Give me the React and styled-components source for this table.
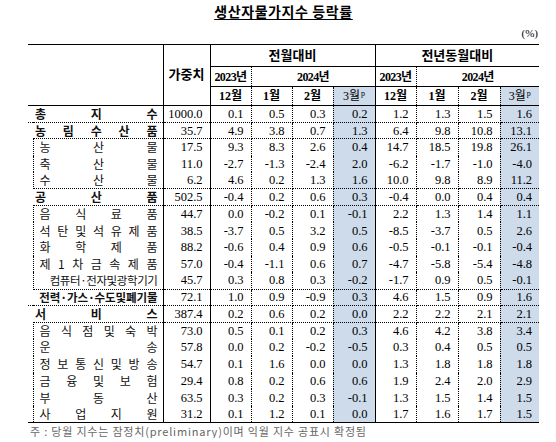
import React from "react";
import styled, { createGlobalStyle } from "styled-components";

// monthly columns: 전월대비 (4) + 전년동월대비 (4)
const MONTHS = ["12월", "1월", "2월", "3월", "12월", "1월", "2월", "3월"];
const COL_RIGHT = ["dotted", "dotted", "dotted", "solid", "dotted", "dotted", "dotted", null];
const MONTH_WIDTHS = [41, 41, 41, 42, 41, 42, 42, 39];

const ROWS = [
  { label: "총지수", kind: "total", w: "1000.0", v: ["0.1", "0.5", "0.3", "0.2", "1.2", "1.3", "1.5", "1.6"] },
  { label: "농림수산품", kind: "group", w: "35.7", v: ["4.9", "3.8", "0.7", "1.3", "6.4", "9.8", "10.8", "13.1"] },
  { label: "농산물", kind: "sub", w: "17.5", v: ["9.3", "8.3", "2.6", "0.4", "14.7", "18.5", "19.8", "26.1"] },
  { label: "축산물", kind: "sub", w: "11.0", v: ["-2.7", "-1.3", "-2.4", "2.0", "-6.2", "-1.7", "-1.0", "-4.0"] },
  { label: "수산물", kind: "sub", w: "6.2", v: ["4.6", "0.2", "1.3", "1.6", "10.0", "9.8", "8.9", "11.2"] },
  { label: "공산품", kind: "group", w: "502.5", v: ["-0.4", "0.2", "0.6", "0.3", "-0.4", "0.0", "0.4", "0.4"] },
  { label: "음식료품", kind: "sub", w: "44.7", v: ["0.0", "-0.2", "0.1", "-0.1", "2.2", "1.3", "1.4", "1.1"] },
  { label: "석탄및석유제품", kind: "sub", w: "38.5", v: ["-3.7", "0.5", "3.2", "0.5", "-8.5", "-3.7", "0.5", "2.6"] },
  { label: "화학제품", kind: "sub", w: "88.2", v: ["-0.6", "0.4", "0.9", "0.6", "-0.5", "-0.1", "-0.1", "-0.4"] },
  { label: "제1차금속제품", kind: "sub", w: "57.0", v: ["-0.4", "-1.1", "0.6", "0.7", "-4.7", "-5.8", "-5.4", "-4.8"] },
  { label: "컴퓨터·전자및광학기기", kind: "sub", tight: true, w: "45.7", v: ["0.3", "0.8", "0.3", "-0.2", "-1.7", "0.9", "0.5", "-0.1"] },
  { label: "전력·가스·수도및폐기물", kind: "group", tight: true, w: "72.1", v: ["1.0", "0.9", "-0.9", "0.3", "4.6", "1.5", "0.9", "1.6"] },
  { label: "서비스", kind: "group", w: "387.4", v: ["0.2", "0.6", "0.2", "0.0", "2.2", "2.2", "2.1", "2.1"] },
  { label: "음식점및숙박", kind: "sub", w: "73.0", v: ["0.5", "0.1", "0.2", "0.3", "4.6", "4.2", "3.8", "3.4"] },
  { label: "운송", kind: "sub", w: "57.8", v: ["0.0", "0.2", "-0.2", "-0.5", "0.3", "0.4", "0.5", "0.5"] },
  { label: "정보통신및방송", kind: "sub", w: "54.7", v: ["0.1", "1.6", "0.0", "0.0", "1.3", "1.8", "1.8", "1.8"] },
  { label: "금융및보험", kind: "sub", w: "29.4", v: ["0.8", "0.2", "0.6", "0.6", "1.9", "2.4", "2.0", "2.9"] },
  { label: "부동산", kind: "sub", w: "63.5", v: ["0.3", "0.2", "0.3", "-0.1", "1.3", "1.5", "1.4", "1.5"] },
  { label: "사업지원", kind: "sub", w: "31.2", v: ["0.1", "1.2", "0.1", "0.0", "1.7", "1.6", "1.7", "1.5"] },
];

const HL = "#cddbeb";
const line = (style) => (style ? `1px ${style} #000` : "none");

const App = () => {
  return (
    <>
      <GlobalStyle />
      <Page>
        <Title>생산자물가지수 등락률</Title>
        <Unit>(%)</Unit>
        <Table>
          <colgroup>
            <col style={{ width: 5 }} />
            <col style={{ width: 130 }} />
            <col style={{ width: 47 }} />
            {MONTH_WIDTHS.map((w, i) => (
              <col key={i} style={{ width: w }} />
            ))}
          </colgroup>
          <thead>
            <HeadRow $h={22}>
              <Head colSpan={2} rowSpan={3} $r="solid" />
              <Head rowSpan={3} $r="solid" $size={13}>
                가중치
              </Head>
              <Head colSpan={4} $r="solid" $size={13}>
                전월대비
              </Head>
              <Head colSpan={4} $size={13}>
                전년동월대비
              </Head>
            </HeadRow>
            <HeadRow $h={20}>
              <Head $r="dotted" $tight>
                2023년
              </Head>
              <Head colSpan={3} $r="solid" $tight>
                2024년
              </Head>
              <Head $r="dotted" $tight>
                2023년
              </Head>
              <Head colSpan={3} $tight>
                2024년
              </Head>
            </HeadRow>
            <HeadRow $h={19}>
              {MONTHS.map((m, i) => {
                const last = i === 3 || i === 7;
                return (
                  <Head key={i} $r={COL_RIGHT[i]} $hl={last} $light={last}>
                    {m}
                    {last && <Sup>p</Sup>}
                  </Head>
                );
              })}
            </HeadRow>
          </thead>
          <tbody>
            {ROWS.map((row, idx) => {
              const prev = ROWS[idx - 1];
              const next = ROWS[idx + 1];
              const isSub = row.kind === "sub";
              const firstSub = isSub && prev && prev.kind !== "sub";
              const lastSub = isSub && (!next || next.kind !== "sub");
              const isEnd = !next;
              let bottom = null;
              if (isEnd) bottom = "solid";
              else if (row.kind !== "sub" || lastSub) bottom = "dotted";
              const labelBottom = isEnd
                ? "solid"
                : row.kind === "total" || lastSub || (row.kind === "group" && next.kind !== "sub")
                ? "dotted"
                : null;

              const text = row.tight ? (
                <Tight $bold={!isSub}>{row.label}</Tight>
              ) : (
                <Spread $bold={!isSub}>
                  {row.label.split("").map((ch, k) => (
                    <span key={k}>{ch}</span>
                  ))}
                </Spread>
              );

              return (
                <BodyRow key={idx}>
                  {isSub ? (
                    <>
                      <Spacer $b={isEnd ? "solid" : null} />
                      <LabelCell $sub $top={firstSub ? "dotted" : null} $b={labelBottom}>
                        {text}
                      </LabelCell>
                    </>
                  ) : (
                    <LabelCell colSpan={2} $b={labelBottom}>
                      {text}
                    </LabelCell>
                  )}
                  <Num $r="solid" $b={bottom}>
                    {row.w}
                  </Num>
                  {row.v.map((val, i) => (
                    <Num key={i} $r={COL_RIGHT[i]} $b={bottom} $hl={i === 3 || i === 7}>
                      {val}
                    </Num>
                  ))}
                </BodyRow>
              );
            })}
          </tbody>
        </Table>
        <Note>주 : 당월 지수는 잠정치(preliminary)이며 익월 지수 공표시 확정됨</Note>
      </Page>
    </>
  );
};

const GlobalStyle = createGlobalStyle`
  html, body {
    margin: 0;
    padding: 0;
    background: #fff;
  }
  body {
    font-family: "Liberation Serif", "Noto Sans CJK KR", serif;
    color: #000;
  }
`;

const Page = styled.div`
  width: 556px;
  padding: 0 17px 0 28px;
  box-sizing: border-box;
`;

const Title = styled.h1`
  margin: 0;
  height: 22px;
  padding-top: 3px;
  box-sizing: border-box;
  text-align: center;
  font-family: "Noto Sans CJK KR", sans-serif;
  font-size: 14px;
  line-height: 16px;
  font-weight: 700;
  letter-spacing: 0.6px;
  text-decoration: underline;
  text-underline-offset: 2px;
`;

const Unit = styled.div`
  height: 22px;
  text-align: right;
  font-size: 11px;
  line-height: 22px;
  padding-right: 1px;
`;

const Table = styled.table`
  width: 511px;
  border-collapse: collapse;
  table-layout: fixed;
  border-top: 1px solid #000;
`;

const HeadRow = styled.tr`
  height: ${(p) => p.$h}px;
`;

const Head = styled.th`
  padding: 0;
  font-family: "Liberation Serif", "Noto Sans CJK KR", serif;
  font-weight: ${(p) => (p.$light ? 400 : 700)};
  font-size: ${(p) => p.$size || 12}px;
  letter-spacing: ${(p) => (p.$tight ? "-0.6px" : "0")};
  line-height: 14px;
  text-align: center;
  vertical-align: middle;
  white-space: nowrap;
  border-right: ${(p) => line(p.$r)};
  border-bottom: 1px solid #000;
  background: ${(p) => (p.$hl ? HL : "transparent")};
`;

const Sup = styled.sup`
  font-size: 8px;
  vertical-align: 4px;
  line-height: 0;
  margin-left: 1px;
`;

const BodyRow = styled.tr`
  height: 16.7px;
`;

const Spacer = styled.td`
  padding: 0;
  border-bottom: ${(p) => line(p.$b)};
`;

const LabelCell = styled.td`
  padding: 0 5px 0 ${(p) => (p.$sub ? 6 : 7)}px;
  border-right: 1px solid #000;
  border-left: ${(p) => (p.$sub ? "1px dotted #000" : "none")};
  border-top: ${(p) => line(p.$top)};
  border-bottom: ${(p) => line(p.$b)};
  vertical-align: middle;
`;

const Spread = styled.div`
  display: flex;
  justify-content: space-between;
  font-family: "Noto Sans CJK KR", sans-serif;
  font-size: 12px;
  line-height: 14px;
  font-weight: ${(p) => (p.$bold ? 700 : 400)};
  color: #111;
`;

const Tight = styled.div`
  text-align: right;
  white-space: nowrap;
  font-family: "Noto Sans CJK KR", sans-serif;
  font-size: 11.5px;
  line-height: 13px;
  letter-spacing: ${(p) => (p.$bold ? "-0.1px" : "-0.4px")};
  font-weight: ${(p) => (p.$bold ? 700 : 400)};
  color: #111;
`;

const Num = styled.td`
  padding: 0 7px 0 0;
  text-align: right;
  font-size: 12.5px;
  line-height: 14px;
  vertical-align: middle;
  white-space: nowrap;
  border-right: ${(p) => line(p.$r)};
  border-bottom: ${(p) => line(p.$b)};
  background: ${(p) => (p.$hl ? HL : "transparent")};
`;

const Note = styled.p`
  margin: 0;
  padding: 1px 0 0 2px;
  font-family: "Noto Sans CJK KR", sans-serif;
  font-size: 11px;
  line-height: 14px;
  letter-spacing: 0.8px;
  color: #666;
`;

export default App;
